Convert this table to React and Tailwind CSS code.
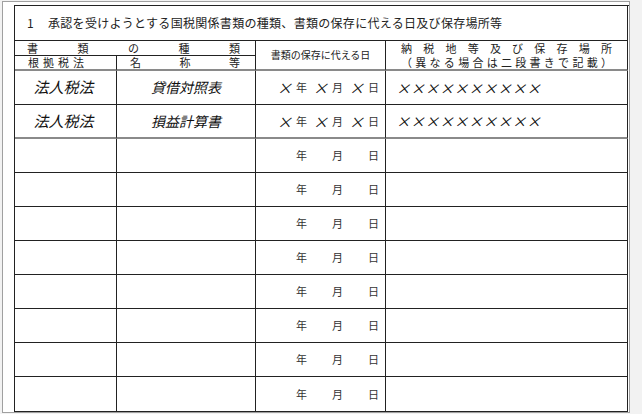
import React from 'react';

const jp = { fontFamily: '"Noto Sans CJK JP", "Noto Sans", sans-serif' };

const DateCell = ({ filled, thick }) => (
  <div
    className={`flex items-center justify-end pr-[5px] border-r border-[#222] ${thick ? 'border-b-2 border-b-[#8a8a8a]' : 'border-b'}`}
  >
    {['年', '月', '日'].map((u, i) => (
      <div key={u} className={`flex items-center ${i > 0 ? 'ml-[5px]' : ''}`}>
        <span className={`w-[12px] text-center italic text-[15px] leading-none ${filled ? 'text-[#111]' : 'text-transparent'}`}>×</span>
        <span className="ml-[7px] w-[12px] text-[11px] leading-none text-[#333]">{u}</span>
      </div>
    ))}
  </div>
);

const cell = 'border-r border-b border-[#222]';

const App = () => {
  const filledRows = [
    { law: '法人税法', name: '貸借対照表' },
    { law: '法人税法', name: '損益計算書' },
  ];
  const emptyRows = Array.from({ length: 8 });

  return (
    <div className="w-[642px] h-[414px] bg-[#f2f2f2] overflow-hidden" style={jp}>
      <div className="ml-[2px] mt-[1px] w-[628px] h-[412px] border border-[#a0a0a0] bg-white pl-[11px] pt-[3px]">
        <div className="grid grid-cols-[102px_139px_130px_242px] grid-rows-[35px_15px_15px_repeat(9,34px)_35px] border-l border-t border-[#222] text-[#222]">
          {/* Title */}
          <div className={`col-span-4 flex items-center pl-[12px] text-[12px] tracking-[0.3px] ${cell}`}>
            <span className="w-[21px]">1</span>
            <span>承認を受けようとする国税関係書類の種類、書類の保存に代える日及び保存場所等</span>
          </div>

          {/* Header */}
          <div className={`col-span-2 flex items-center justify-between pl-[12px] pr-[15px] text-[11px] leading-none ${cell}`}>
            {['書', '類', 'の', '種', '類'].map((c, i) => (
              <span key={i}>{c}</span>
            ))}
          </div>
          <div className="row-span-2 flex items-center justify-center border-r border-[#222] border-b-2 border-b-[#8a8a8a] text-[10px] leading-none">
            書類の保存に代える日
          </div>
          <div className="row-span-2 flex flex-col justify-center gap-[1px] border-r border-[#222] border-b-2 border-b-[#8a8a8a] px-[15px] text-[11px] leading-[13px]">
            <div className="flex justify-between">
              {['納', '税', '地', '等', '及', 'び', '保', '存', '場', '所'].map((c, i) => (
                <span key={i}>{c}</span>
              ))}
            </div>
            <div className="flex justify-between">
              {['（', '異', 'な', 'る', '場', '合', 'は', '二', '段', '書', 'き', 'で', '記', '載', '）'].map((c, i) => (
                <span key={i}>{c}</span>
              ))}
            </div>
          </div>
          <div className="flex items-center pl-[13px] text-[11px] tracking-[4px] leading-none border-r border-[#222] border-b-2 border-b-[#8a8a8a]">
            根拠税法
          </div>
          <div className="flex items-center justify-between pl-[13px] pr-[15px] text-[11px] leading-none border-r border-[#222] border-b-2 border-b-[#8a8a8a]">
            <span>名</span>
            <span>称</span>
            <span>等</span>
          </div>

          {/* Filled rows */}
          {filledRows.map((r, i) => {
            const thick = i === filledRows.length - 1;
            const b = thick ? 'border-r border-[#222] border-b-2 border-b-[#8a8a8a]' : cell;
            return (
              <React.Fragment key={i}>
                <div className={`flex items-center justify-center pr-[4px] italic text-[15px] text-[#111] ${b}`}>{r.law}</div>
                <div className={`flex items-center justify-center italic text-[14px] text-[#111] ${b}`}>{r.name}</div>
                <DateCell filled thick={thick} />
                <div className={`flex items-center pl-[10px] ${b}`}>
                  {Array.from({ length: 10 }).map((_, j) => (
                    <span key={j} className="w-[14.5px] text-center italic text-[14px] leading-none text-[#111]">×</span>
                  ))}
                </div>
              </React.Fragment>
            );
          })}

          {/* Empty rows */}
          {emptyRows.map((_, i) => (
            <React.Fragment key={i}>
              <div className={cell}></div>
              <div className={cell}></div>
              <DateCell />
              <div className={cell}></div>
            </React.Fragment>
          ))}
        </div>
      </div>
    </div>
  );
};

export default App;
